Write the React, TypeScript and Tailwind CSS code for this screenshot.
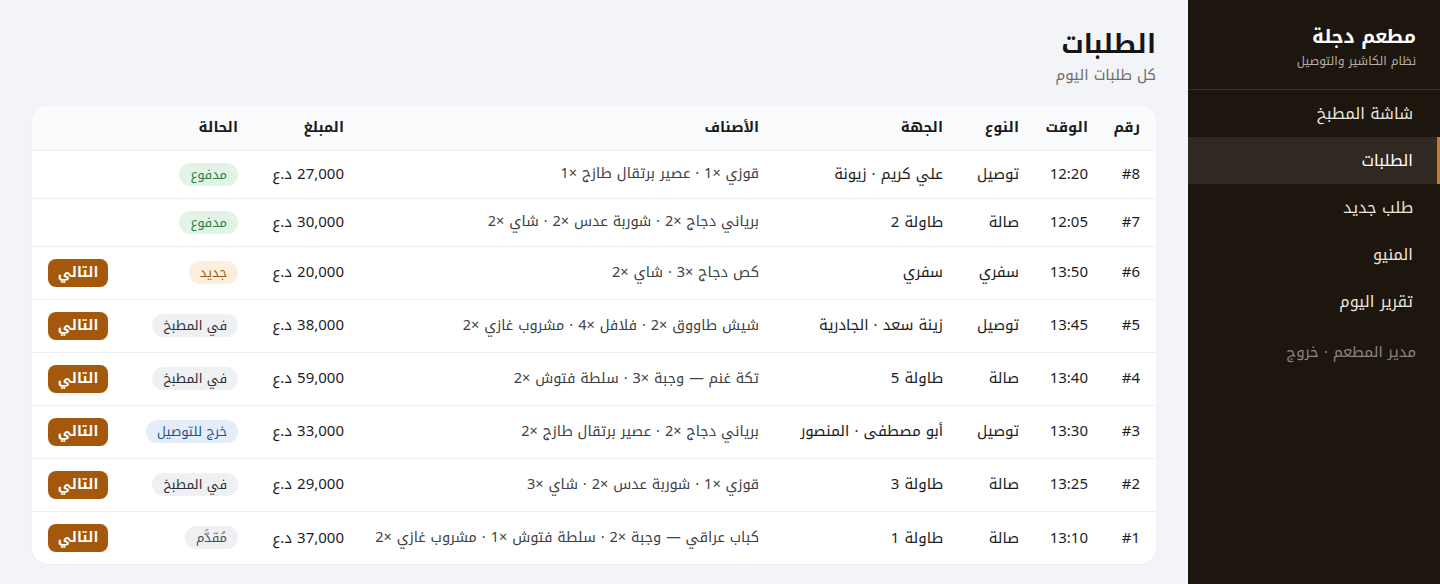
import React from "react";

type Status = "paid" | "new" | "kitchen" | "out" | "served";

interface Order {
	id: number;
	time: string;
	kind: string;
	party: string;
	items: string;
	total: string;
	status: Status;
	next: boolean;
}

const orders: Order[] = [
	{ id: 8, time: "12:20", kind: "توصيل", party: "علي كريم · زيونة", items: "قوزي ×1 · عصير برتقال طازج ×1", total: "27,000", status: "paid", next: false },
	{ id: 7, time: "12:05", kind: "صالة", party: "طاولة 2", items: "برياني دجاج ×2 · شوربة عدس ×2 · شاي ×2", total: "30,000", status: "paid", next: false },
	{ id: 6, time: "13:50", kind: "سفري", party: "سفري", items: "كص دجاج ×3 · شاي ×2", total: "20,000", status: "new", next: true },
	{ id: 5, time: "13:45", kind: "توصيل", party: "زينة سعد · الجادرية", items: "شيش طاووق ×2 · فلافل ×4 · مشروب غازي ×2", total: "38,000", status: "kitchen", next: true },
	{ id: 4, time: "13:40", kind: "صالة", party: "طاولة 5", items: "تكة غنم — وجبة ×3 · سلطة فتوش ×2", total: "59,000", status: "kitchen", next: true },
	{ id: 3, time: "13:30", kind: "توصيل", party: "أبو مصطفى · المنصور", items: "برياني دجاج ×2 · عصير برتقال طازج ×2", total: "33,000", status: "out", next: true },
	{ id: 2, time: "13:25", kind: "صالة", party: "طاولة 3", items: "قوزي ×1 · شوربة عدس ×2 · شاي ×3", total: "29,000", status: "kitchen", next: true },
	{ id: 1, time: "13:10", kind: "صالة", party: "طاولة 1", items: "كباب عراقي — وجبة ×2 · سلطة فتوش ×1 · مشروب غازي ×2", total: "37,000", status: "served", next: true },
];

const statusStyle: Record<Status, { label: string; cls: string }> = {
	paid: { label: "مدفوع", cls: "bg-[#e2f3e7] text-[#2f7d47]" },
	new: { label: "جديد", cls: "bg-[#fcefdc] text-[#9a5a12]" },
	kitchen: { label: "في المطبخ", cls: "bg-[#eef0f3] text-[#2b2d31]" },
	out: { label: "خرج للتوصيل", cls: "bg-[#e4edf8] text-[#234f8c]" },
	served: { label: "مُقدَّم", cls: "bg-[#eef0f3] text-[#4b4f57]" },
};

const nav = ["شاشة المطبخ", "الطلبات", "طلب جديد", "المنيو", "تقرير اليوم"];

export default function App() {
	return (
		<div
			dir="rtl"
			className="flex h-[584px] w-[1440px] overflow-hidden bg-[#f3f4f7] font-['Noto_Kufi_Arabic','Noto_Sans_Arabic',sans-serif] text-[#1d1d1f]"
		>
			{/* Sidebar */}
			<aside className="flex w-[252px] shrink-0 flex-col bg-[#1c160f]">
				<div className="border-b border-[#3a322a] px-6 pb-[19px] pt-6">
					<h1 className="text-[19px] font-bold leading-[26px] text-white">مطعم دجلة</h1>
					<p className="mt-[2px] text-[12px] leading-[18px] text-[#b7aea4]">نظام الكاشير والتوصيل</p>
				</div>
				<nav className="flex flex-col">
					{nav.map((item) => {
						const active = item === "الطلبات";
						return (
							<div
								key={item}
								className={`flex h-[47px] items-center border-r-[3px] pr-[24px] text-[16px] ${
									active
										? "border-[#c07a28] bg-[#2f2922] text-white"
										: "border-transparent text-[#ebe5dd]"
								}`}
							>
								{item}
							</div>
						);
					})}
				</nav>
				<div className="pr-6 pt-[15px] text-[15px] leading-6 text-[#8c857d]">
					مدير المطعم · خروج
				</div>
			</aside>

			{/* Orders list */}
			<main className="flex-1 px-8 pt-[26px]">
				<h2 className="text-[26px] font-bold leading-[38px] text-[#151515]">الطلبات</h2>
				<p className="text-[15px] leading-[22px] text-[#6b6e73]">كل طلبات اليوم</p>

				<div className="mt-[20px] overflow-hidden rounded-2xl bg-white shadow-[0_1px_2px_rgba(0,0,0,0.03)]">
					<table className="w-full table-fixed border-collapse text-right">
						<colgroup>
							<col className="w-[52px]" />
							<col className="w-[69px]" />
							<col className="w-[76px]" />
							<col className="w-[184px]" />
							<col className="w-[415px]" />
							<col className="w-[106px]" />
							<col className="w-[130px]" />
							<col />
						</colgroup>
						<thead>
							<tr className="h-[44px] border-b border-[#eceef1] bg-[#fafbfc] text-[14.5px] font-bold text-[#1b1b1b]">
								<th className="px-4 font-bold">رقم</th>
								<th className="px-4 font-bold">الوقت</th>
								<th className="px-4 font-bold">النوع</th>
								<th className="px-4 font-bold">الجهة</th>
								<th className="px-4 font-bold">الأصناف</th>
								<th className="px-4 font-bold">المبلغ</th>
								<th className="px-4 font-bold">الحالة</th>
								<th className="px-4" />
							</tr>
						</thead>
						<tbody>
							{orders.map((o, i) => {
								const s = statusStyle[o.status];
								return (
									<tr
										key={o.id}
										className={`${o.next ? "h-[53px]" : "h-[48px]"} ${
											i < orders.length - 1 ? "border-b border-[#eceef1]" : ""
										} text-[15px]`}
									>
										<td className="px-4">#{o.id}</td>
										<td className="px-4">{o.time}</td>
										<td className="px-4">{o.kind}</td>
										<td className="whitespace-nowrap px-4">{o.party}</td>
										<td className="whitespace-nowrap px-4 text-[14.5px] text-[#3f4145]">{o.items}</td>
										<td className="whitespace-nowrap px-4">{o.total} د.ع</td>
										<td className="px-4">
											<span className={`inline-block rounded-full px-[11px] py-[2px] text-[13px] leading-[19px] ${s.cls}`}>
												{s.label}
											</span>
										</td>
										<td className="px-4 text-left">
											{o.next && (
												<button className="h-[28px] w-[60px] rounded-lg bg-[#a4580b] text-[14px] font-bold text-white">
													التالي
												</button>
											)}
										</td>
									</tr>
								);
							})}
						</tbody>
					</table>
				</div>
			</main>
		</div>
	);
}
